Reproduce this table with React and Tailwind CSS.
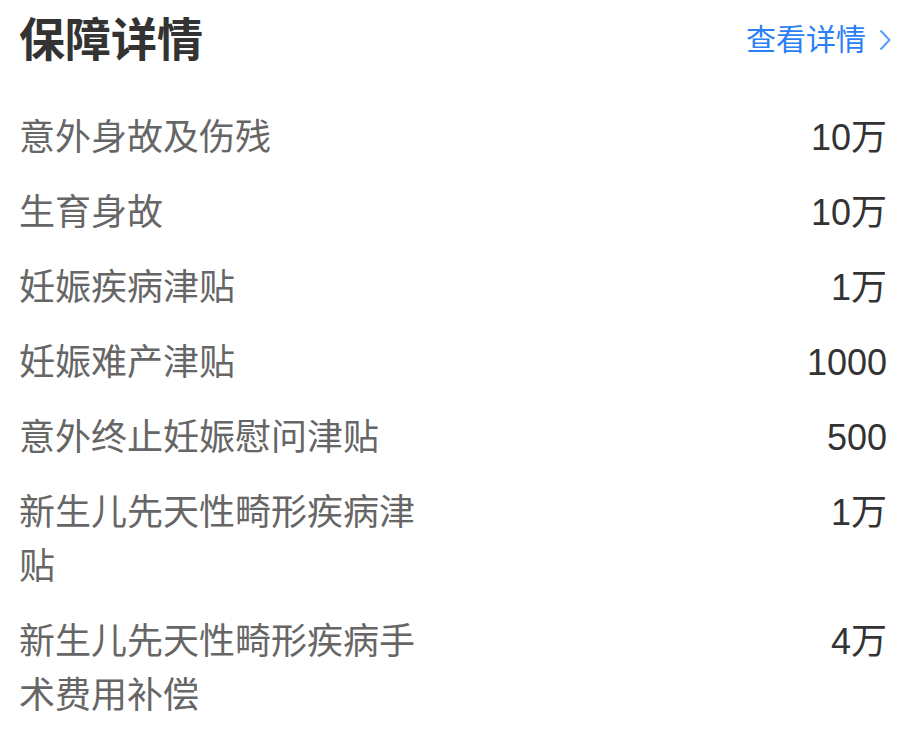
import React from 'react';

const FONT = { fontFamily: '"Liberation Sans", "Noto Sans CJK SC", sans-serif' };

const items = [
  { label: '意外身故及伤残', value: '10万' },
  { label: '生育身故', value: '10万' },
  { label: '妊娠疾病津贴', value: '1万' },
  { label: '妊娠难产津贴', value: '1000' },
  { label: '意外终止妊娠慰问津贴', value: '500' },
  { label: '新生儿先天性畸形疾病津贴', value: '1万' },
  { label: '新生儿先天性畸形疾病手术费用补偿', value: '4万' },
];

export default function App() {
  return (
    <div className="w-[921px] h-[735px] bg-white pl-[19px] pr-[34px] overflow-hidden" style={FONT}>
      {/* Header */}
      <div className="flex items-center justify-between h-[80px]">
        <h2 className="text-[46px] font-bold text-[#333] leading-none">保障详情</h2>
        <a className="flex items-center gap-[13px] text-[30px] text-[#2b7ff5] leading-none -mr-[4px]">
          查看详情
          <svg width="12" height="22" viewBox="0 0 12 22" fill="none">
            <path d="M1.5 1.5 L10.5 11 L1.5 20.5" stroke="#5b9ef7" strokeWidth="2" />
          </svg>
        </a>
      </div>

      {/* Rows */}
      <div className="mt-[31px] flex flex-col gap-[21px]">
        {items.map((it) => (
          <div key={it.label} className="flex items-start justify-between">
            <div className="max-w-[410px] text-[36px] leading-[54px] text-[#666]">{it.label}</div>
            <div className="text-[36px] leading-[54px] text-[#333]">{it.value}</div>
          </div>
        ))}
      </div>
    </div>
  );
}
